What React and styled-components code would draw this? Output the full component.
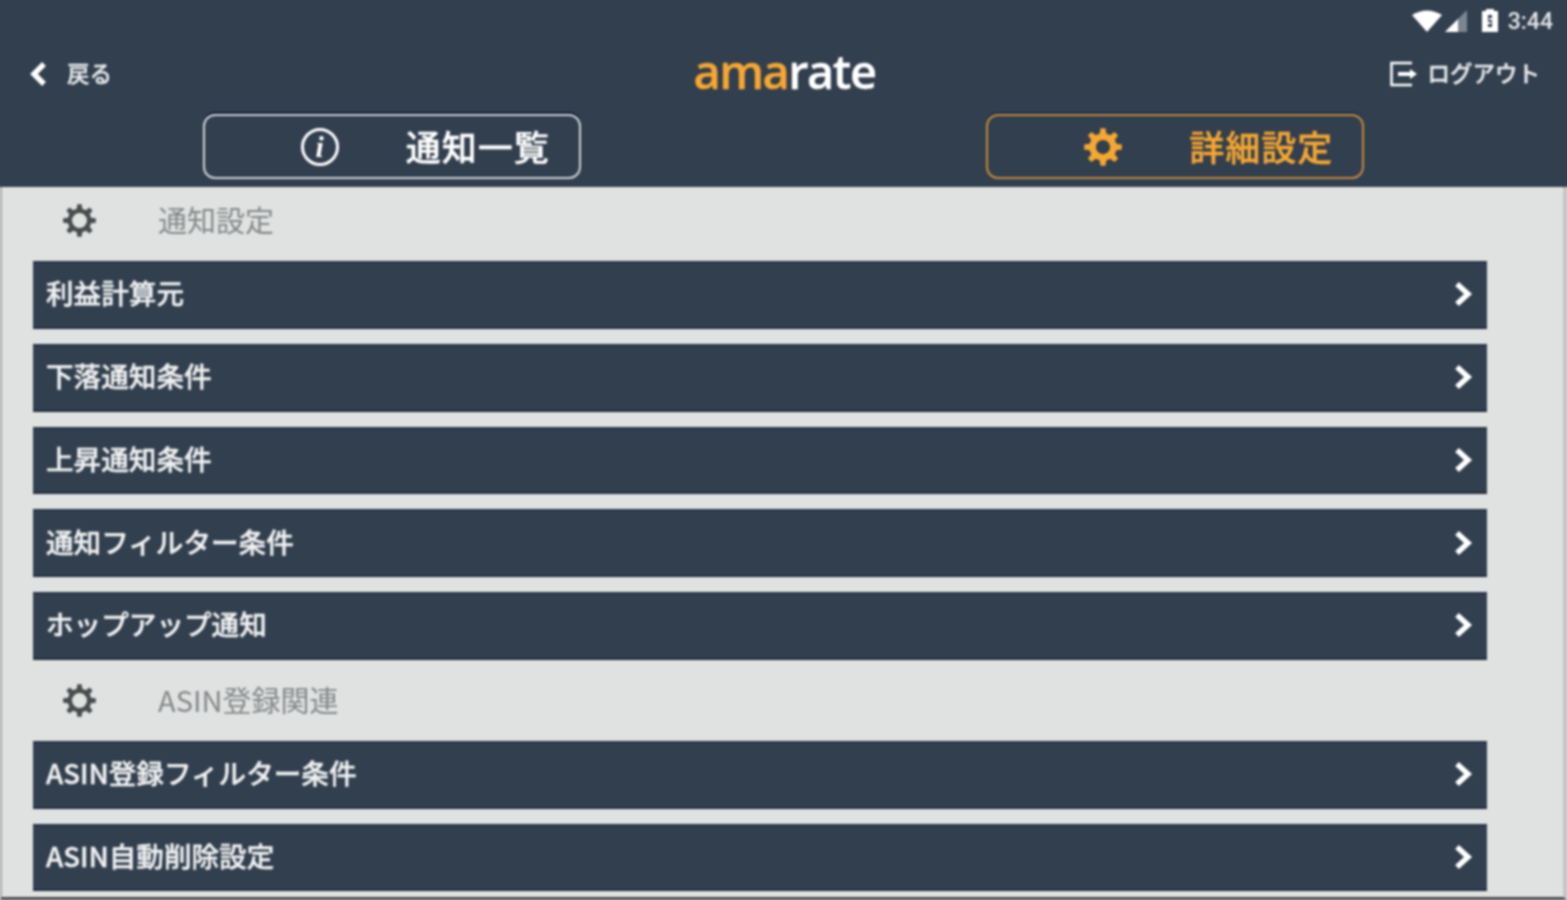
import React from 'react'
import styled, { createGlobalStyle } from 'styled-components'

const GlobalStyle = createGlobalStyle`
  html, body {
    margin: 0;
    padding: 0;
    background: #e0e2e1;
  }
  body {
    font-family: "Noto Sans CJK JP", "Noto Sans", sans-serif;
    overflow: hidden;
  }
`

const sections = [
  {
    title: '通知設定',
    items: ['利益計算元', '下落通知条件', '上昇通知条件', '通知フィルター条件', 'ホップアップ通知'],
  },
  {
    title: 'ASIN登録関連',
    items: ['ASIN登録フィルター条件', 'ASIN自動削除設定'],
  },
]

// 8 tooth cog on a 40x40 box
const cogPath = (outer, root) => {
  const teeth = 8
  const point = (r, a) => `${(20 + r * Math.cos(a)).toFixed(2)} ${(20 + r * Math.sin(a)).toFixed(2)}`
  let d = ''
  for (let i = 0; i < teeth; i++) {
    const a = (i * 2 * Math.PI) / teeth - Math.PI / 2
    const step = (2 * Math.PI) / teeth
    d += `${i === 0 ? 'M' : 'L'}${point(root, a - step * 0.3)} L${point(outer, a - step * 0.17)} L${point(outer, a + step * 0.17)} L${point(root, a + step * 0.3)} `
  }
  return d + 'Z'
}

const Cog = ({ size, hole }) => (
  <svg width={size} height={size} viewBox="0 0 40 40">
    <path
      fillRule="evenodd"
      fill="currentColor"
      d={`${cogPath(20, 14.5)} M${20 - hole} 20 a${hole} ${hole} 0 1 0 ${hole * 2} 0 a${hole} ${hole} 0 1 0 ${-hole * 2} 0 Z`}
    />
  </svg>
)

const ChevronRight = () => (
  <RowChevron viewBox="0 0 20 28" fill="none">
    <polyline points="4,4 15,14 4,24" stroke="#fff" strokeWidth="5.5" />
  </RowChevron>
)

const App = () => {
  return (
    <Page>
      <GlobalStyle />
      <Header>
        <StatusBar>
          <svg width="30" height="24" viewBox="0 0 30 24">
            <path d="M0 6 Q15 -3 30 6 L15 23 Z" fill="#fff" />
          </svg>
          <SignalIcon width="24" height="24" viewBox="0 0 24 24">
            <path d="M23 1 V23 H1 Z" fill="#7d8590" />
            <path d="M14 10 V23 H1 Z" fill="#fff" />
          </SignalIcon>
          <BatteryIcon width="18" height="24" viewBox="0 0 18 24">
            <path d="M5 0 H13 V2 H17 V23 H1 V2 H5 Z" fill="#fff" />
            <path d="M11 6 H7 V13 H10 V15 H7 V18 H11 V11 H8 V9 H11 Z" fill="#323e4f" />
          </BatteryIcon>
          <Clock>3:44</Clock>
        </StatusBar>
        <NavBar>
          <NavLink>
            <svg width="18" height="28" viewBox="0 0 18 28" fill="none">
              <polyline points="15,4 5,14 15,24" stroke="#fff" strokeWidth="5.5" />
            </svg>
            <NavLabel>戻る</NavLabel>
          </NavLink>
          <Logo>
            <LogoAccent>ama</LogoAccent>rate
          </Logo>
          <LogoutLink>
            <svg width="28" height="26" viewBox="0 0 28 26" fill="none">
              <path d="M22 2 H1.5 V24 H22" stroke="#fff" strokeWidth="2.5" />
              <path d="M8 11 H20 V8 L27 13 L20 18 V15 H8 Z" fill="#fff" />
            </svg>
            <NavLabel>ログアウト</NavLabel>
          </LogoutLink>
        </NavBar>
        <TabRow>
          <Tab>
            <TabIcon>
              <InfoCircle>i</InfoCircle>
            </TabIcon>
            <TabLabel>通知一覧</TabLabel>
          </Tab>
          <Tab $active>
            <TabIcon>
              <Cog size={38} hole={7.5} />
            </TabIcon>
            <TabLabel>詳細設定</TabLabel>
          </Tab>
        </TabRow>
      </Header>
      <Content>
        {sections.map(section => (
          <section key={section.title}>
            <SectionHeading>
              <SectionIcon>
                <Cog size={33} hole={9} />
              </SectionIcon>
              <SectionTitle>{section.title}</SectionTitle>
            </SectionHeading>
            <List>
              {section.items.map(item => (
                <Row key={item}>
                  <RowLabel>{item}</RowLabel>
                  <ChevronRight />
                </Row>
              ))}
            </List>
          </section>
        ))}
      </Content>
    </Page>
  )
}

const Page = styled.div`
  width: 1567px;
  height: 900px;
  display: flex;
  flex-direction: column;
  background: #e0e2e1;
  filter: blur(0.9px);
`

const Header = styled.header`
  height: 187px;
  flex-shrink: 0;
  box-sizing: border-box;
  background: #323f4e;
  /* keeps the blur from fading to the page colour at the window edges */
  box-shadow: -6px 0 0 #323f4e, 6px 0 0 #323f4e, 0 -6px 0 #323f4e, -6px -6px 0 #323f4e, 6px -6px 0 #323f4e;
  color: #fff;
`

const StatusBar = styled.div`
  height: 42px;
  padding: 0 14px 0 0;
  box-sizing: border-box;
  display: flex;
  justify-content: flex-end;
  align-items: center;
`

const SignalIcon = styled.svg`
  margin-left: 2px;
`

const BatteryIcon = styled.svg`
  margin-left: 13px;
`

const Clock = styled.span`
  margin-left: 9px;
  font-family: "Roboto", sans-serif;
  font-size: 23px;
  font-weight: 500;
  color: #e4e6e9;
`

const NavBar = styled.div`
  height: 64px;
  padding: 0 27px 0 29px;
  display: grid;
  grid-template-columns: 1fr auto 1fr;
  align-items: center;
`

const NavLink = styled.div`
  display: flex;
  align-items: center;
  gap: 20px;
`

const LogoutLink = styled(NavLink)`
  justify-content: flex-end;
  gap: 9px;
`

const NavLabel = styled.span`
  padding-bottom: 4px;
  font-size: 22.5px;
  font-weight: 500;
  -webkit-text-stroke: 0.4px #e6e8ea;
  color: #e6e8ea;
`

const Logo = styled.div`
  padding-bottom: 5px;
  font-family: "Open Sans", sans-serif;
  font-size: 47px;
  font-weight: 600;
  letter-spacing: -1.5px;
  line-height: 59px;
  -webkit-text-stroke: 0.4px currentColor;
  color: #fff;
`

const LogoAccent = styled.span`
  color: #f6a732;
`

const TabRow = styled.div`
  display: grid;
  grid-template-columns: 1fr 1fr;
  justify-items: center;
  padding-top: 8px;
`

const Tab = styled.div`
  width: 378px;
  height: 65px;
  box-sizing: border-box;
  padding-left: 96px;
  display: flex;
  align-items: center;
  gap: 67px;
  border-radius: 12px;
  border: 2px solid ${props => (props.$active ? '#c08a3e' : '#cfd3d8')};
  color: ${props => (props.$active ? '#f6a732' : '#fff')};
  box-shadow: 0 -2px 0 ${props => (props.$active ? '#1f3050' : '#141f40')};
`

const TabIcon = styled.span`
  width: 38px;
  display: flex;
  justify-content: center;
`

const InfoCircle = styled.span`
  width: 38px;
  height: 38px;
  box-sizing: border-box;
  display: flex;
  align-items: center;
  justify-content: center;
  border: 3px solid #fff;
  border-radius: 50%;
  font-family: "Liberation Serif", serif;
  font-style: italic;
  font-weight: 700;
  font-size: 30px;
`

const TabLabel = styled.span`
  padding-bottom: 2px;
  font-size: 35px;
  font-weight: 500;
  letter-spacing: 1px;
  -webkit-text-stroke: 0.4px currentColor;
`

const Content = styled.main`
  flex: 1;
  padding: 0 0 0 33px;
  border-left: 2px solid #a8aaaa;
  border-right: 4px solid #c4c6c6;
  border-bottom: 3px solid #4a4c4e;
  box-sizing: border-box;
`

const SectionHeading = styled.div`
  height: 74px;
  display: flex;
  align-items: center;
  padding: 0 0 7px 27px;
  box-sizing: border-box;
  section + section & {
    height: 81px;
    padding-bottom: 0;
  }
`

const SectionIcon = styled.span`
  width: 34px;
  display: flex;
  justify-content: center;
  color: #4a4d50;
`

const SectionTitle = styled.span`
  margin-left: 62px;
  padding-bottom: 3px;
  font-size: 29px;
  color: #85888a;
`

const List = styled.div`
  width: 1454px;
  margin-left: -2px;
  display: flex;
  flex-direction: column;
  gap: 15px;
`

const Row = styled.div`
  height: 67.75px;
  box-sizing: border-box;
  padding: 0 14px 0 13px;
  display: flex;
  align-items: center;
  justify-content: space-between;
  background: #323f4e;
  box-shadow: inset 0 -2px 0 #232e3e, inset 0 2px 0 #2a3648;
`

const RowLabel = styled.span`
  padding-bottom: 5px;
  font-size: 27.6px;
  font-weight: 500;
  -webkit-text-stroke: 0.4px #f0f1f2;
  color: #f0f1f2;
`

const RowChevron = styled.svg`
  width: 20px;
  height: 28px;
  margin-bottom: 1px;
`

export default App
